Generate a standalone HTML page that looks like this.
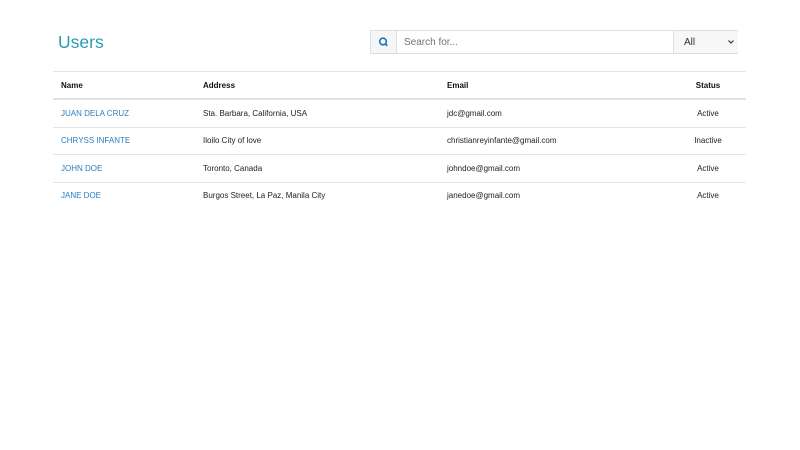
<!DOCTYPE html>
<html><head><style>
body{margin:0;background:#fff;font-family:"Liberation Sans",sans-serif;width:800px;height:450px;overflow:hidden;position:relative}
.t{position:absolute;left:58px;top:32px;font-size:17.5px;color:#2a9cb0}
.sg{position:absolute;left:370px;top:30px;width:366px;height:22px;border:1px solid #dcdfe3}
.ic{position:absolute;left:0;top:0;width:25px;height:22px;background:#f5f6f8;border-right:1px solid #dcdfe3}
.ph{position:absolute;left:33px;top:6px;font-size:10px;color:#6c757d}
.sel{position:absolute;left:302px;top:0;width:64px;height:22px;border-left:1px solid #dcdfe3;background:#f7f7f8}
.sel span{position:absolute;left:10px;top:6px;font-size:10px;color:#333}
table{position:absolute;left:53px;top:71px;width:693px;border-collapse:collapse;font-size:8px;color:#222}
td,th{height:26.5px;padding:0 8px;border-top:1px solid #e3e6e9;text-align:left}
th{height:25px;border-bottom:2px solid #dee2e6;font-weight:bold;color:#111;padding-top:1px}
.a{color:#2a7fc2}
.c{text-align:center}
</style></head><body>
<div class="t">Users</div>
<div class="sg"><div class="ic"><svg width="25" height="22"><circle cx="12" cy="10.5" r="3.3" fill="none" stroke="#1e73b8" stroke-width="1.6"/><line x1="14.3" y1="12.8" x2="16.3" y2="14.8" stroke="#1e73b8" stroke-width="1.8"/></svg></div>
<div class="ph">Search for...</div>
<div class="sel"><span>All</span><svg style="position:absolute;left:54px;top:9px" width="6" height="4"><path d="M0.5 0.5L3 3L5.5 0.5" fill="none" stroke="#333" stroke-width="1.2"/></svg></div></div>
<table>
<tr><th style="width:126px">Name</th><th style="width:228px">Address</th><th>Email</th><th class="c" style="width:60px">Status</th></tr>
<tr><td class="a">JUAN DELA CRUZ</td><td>Sta. Barbara, California, USA</td><td>jdc@gmail.com</td><td class="c">Active</td></tr>
<tr><td class="a">CHRYSS INFANTE</td><td>Iloilo City of love</td><td>christianreyinfante@gmail.com</td><td class="c">Inactive</td></tr>
<tr><td class="a">JOHN DOE</td><td>Toronto, Canada</td><td>johndoe@gmail.com</td><td class="c">Active</td></tr>
<tr><td class="a">JANE DOE</td><td>Burgos Street, La Paz, Manila City</td><td>janedoe@gmail.com</td><td class="c">Active</td></tr>
</table>
</body></html>
